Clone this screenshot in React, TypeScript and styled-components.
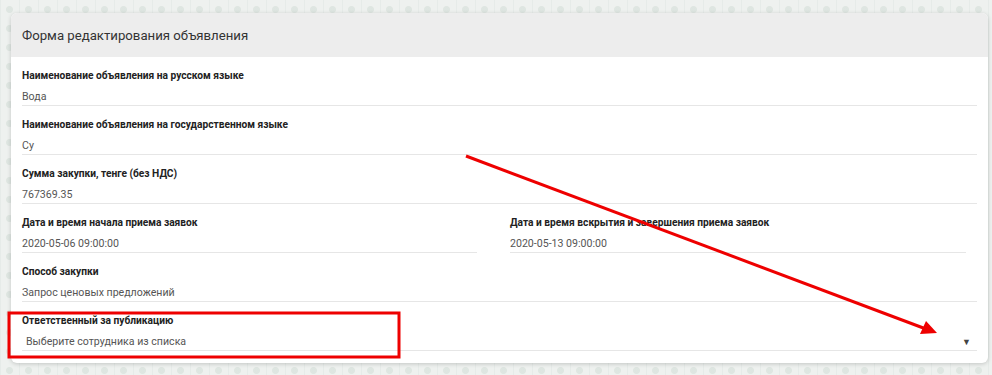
import styled, { createGlobalStyle } from 'styled-components';

const GlobalStyle = createGlobalStyle`
  html, body {
    margin: 0;
    padding: 0;
  }
  body {
    background-color: #eef1ef;
    background-image:
      radial-gradient(circle at 50% 50%, rgba(210, 220, 214, 0.55) 0 3px, transparent 4px),
      linear-gradient(90deg, rgba(225, 232, 228, 0.6) 1px, transparent 1px);
    background-size: 19px 19px, 19px 19px;
    font-family: Roboto, 'Liberation Sans', Arial, sans-serif;
  }
`;

const Page = styled.div`
  position: relative;
  width: 992px;
  height: 375px;
  padding: 13px 4px 0 11px;
  box-sizing: border-box;
`;

const Card = styled.section`
  width: 977px;
  background: #fff;
  border-radius: 6px;
  box-shadow: 0 1px 4px rgba(0, 0, 0, 0.18);
  overflow: hidden;
`;

const CardHeader = styled.header`
  height: 44px;
  display: flex;
  align-items: center;
  padding: 0 11px;
  background: #ededed;
  font-size: 13.2px;
  color: #333;
`;

const CardBody = styled.div`
  padding: 0 11px 12px;
`;

const Row = styled.div`
  display: grid;
  grid-template-columns: 455px 456px;
  column-gap: 33px;
`;

const Field = styled.div`
  padding-top: 12px;
  border-bottom: 1px solid #e6e6e6;
`;

const Label = styled.div`
  font-size: 10.2px;
  line-height: 14px;
  font-weight: 700;
  color: #222;
`;

const Value = styled.div<{ $indent?: boolean }>`
  margin-top: 6px;
  padding-left: ${({ $indent }) => ($indent ? '4px' : '0')};
  font-size: 10.6px;
  line-height: 16px;
  color: #555;
  display: flex;
  justify-content: space-between;
  align-items: center;
`;

const Caret = styled.span`
  font-size: 9px;
  color: #444;
  margin-right: 6px;
`;

const Overlay = styled.svg`
  position: absolute;
  left: 0;
  top: 0;
  pointer-events: none;
`;

export default function App() {
  return (
    <Page>
      <GlobalStyle />
      <Card>
        <CardHeader>Форма редактирования объявления</CardHeader>
        <CardBody>
          <Field>
            <Label>Наименование объявления на русском языке</Label>
            <Value>Вода</Value>
          </Field>
          <Field>
            <Label>Наименование объявления на государственном языке</Label>
            <Value>Су</Value>
          </Field>
          <Field>
            <Label>Сумма закупки, тенге (без НДС)</Label>
            <Value>767369.35</Value>
          </Field>
          <Row>
            <Field>
              <Label>Дата и время начала приема заявок</Label>
              <Value>2020-05-06 09:00:00</Value>
            </Field>
            <Field>
              <Label>Дата и время вскрытия и завершения приема заявок</Label>
              <Value>2020-05-13 09:00:00</Value>
            </Field>
          </Row>
          <Field>
            <Label>Способ закупки</Label>
            <Value>Запрос ценовых предложений</Value>
          </Field>
          <Field>
            <Label>Ответственный за публикацию</Label>
            <Value $indent>
              <span>Выберите сотрудника из списка</span>
              <Caret>▼</Caret>
            </Value>
          </Field>
        </CardBody>
      </Card>
      <Overlay width="992" height="375" viewBox="0 0 992 375">
        <rect x="9" y="313" width="390" height="44" fill="none" stroke="#ee0000" strokeWidth="3" />
        <line x1="466" y1="156" x2="926" y2="329" stroke="#ee0000" strokeWidth="3" />
        <polygon points="937,333 920,334 926,321" fill="#ee0000" />
      </Overlay>
    </Page>
  );
}
